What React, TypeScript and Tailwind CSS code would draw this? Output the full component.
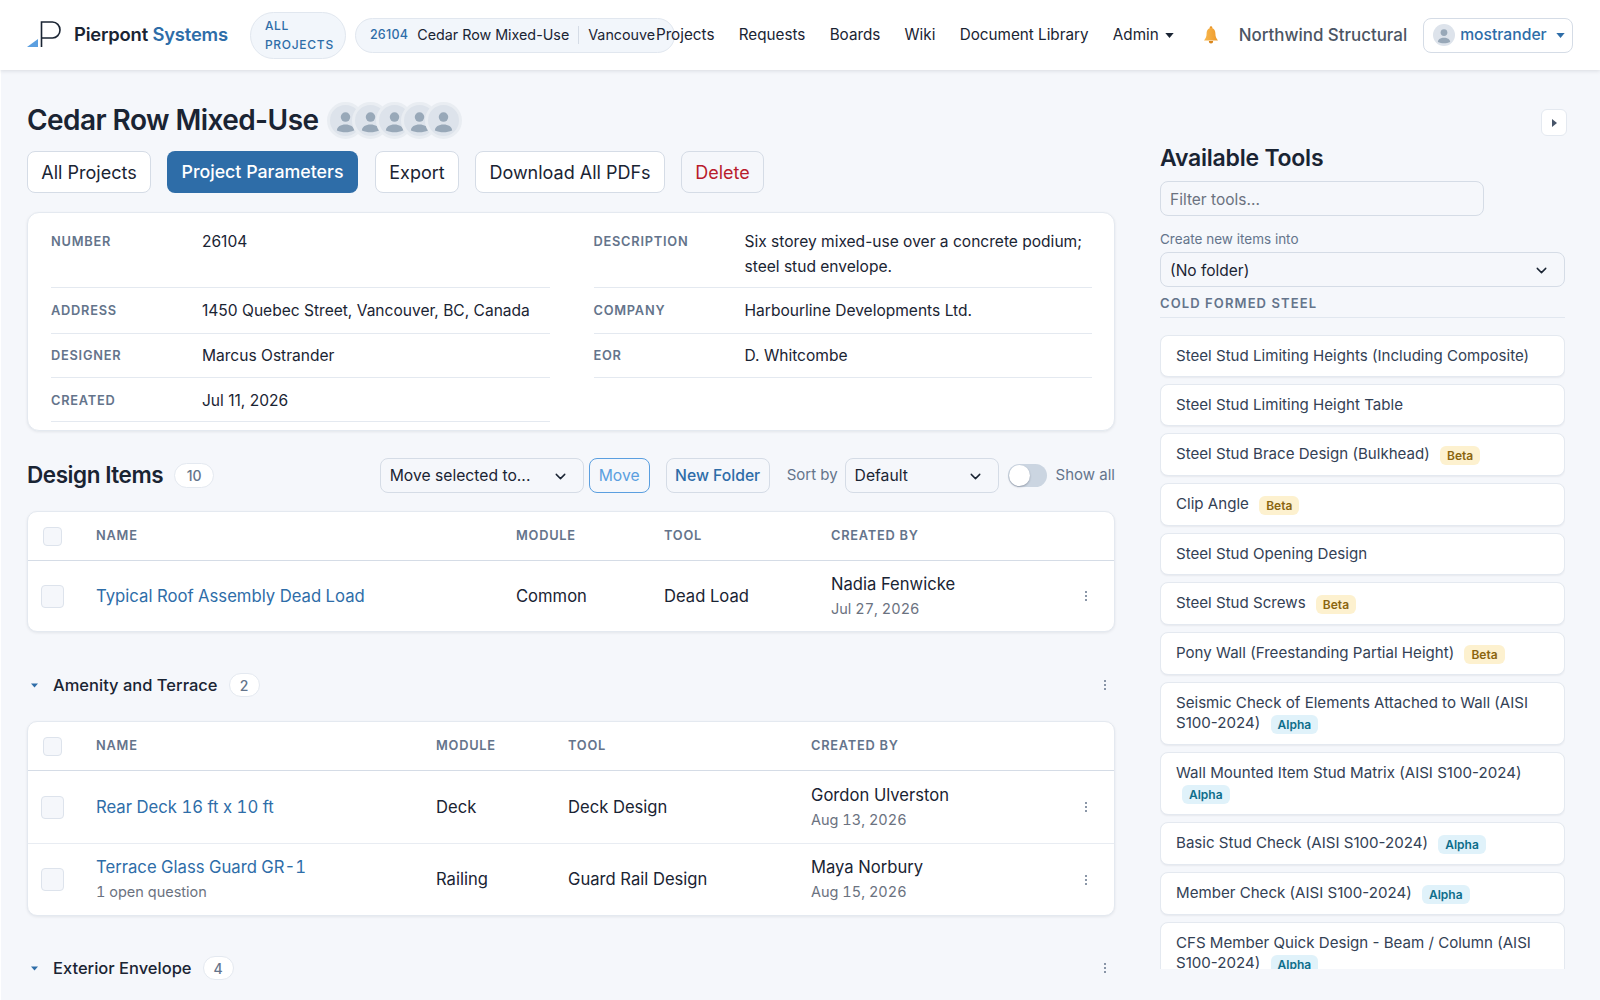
import { ChevronDown } from "lucide-react";

const navLinks = ["Projects", "Requests", "Boards", "Wiki", "Document Library"];

const params = [
  [
    ["Number", "26104"],
    ["Address", "1450 Quebec Street, Vancouver, BC, Canada"],
    ["Designer", "Marcus Ostrander"],
    ["Created", "Jul 11, 2026"],
  ],
  [
    ["Description", "Six storey mixed-use over a concrete podium; steel stud envelope."],
    ["Company", "Harbourline Developments Ltd."],
    ["EOR", "D. Whitcombe"],
  ],
];

const tools = [
  { name: "Steel Stud Limiting Heights (Including Composite)" },
  { name: "Steel Stud Limiting Height Table" },
  { name: "Steel Stud Brace Design (Bulkhead)", badge: "Beta" },
  { name: "Clip Angle", badge: "Beta" },
  { name: "Steel Stud Opening Design" },
  { name: "Steel Stud Screws", badge: "Beta" },
  { name: "Pony Wall (Freestanding Partial Height)", badge: "Beta" },
  { name: "Seismic Check of Elements Attached to Wall (AISI S100-2024)", badge: "Alpha" },
  { name: "Wall Mounted Item Stud Matrix (AISI S100-2024)", badge: "Alpha" },
  { name: "Basic Stud Check (AISI S100-2024)", badge: "Alpha" },
  { name: "Member Check (AISI S100-2024)", badge: "Alpha" },
  { name: "CFS Member Quick Design - Beam / Column (AISI S100-2024)", badge: "Alpha" },
];

function Avatar({ size = "w-[37px] h-[37px]", ring = "border-[3px] border-[#e9edf2]" }: { size?: string; ring?: string }) {
  return (
    <span className={`${size} ${ring} inline-block rounded-full bg-[#dde3eb] overflow-hidden shrink-0`}>
      <svg viewBox="0 0 36 36" className="w-full h-full">
        <circle cx="18" cy="14" r="5.500" fill="#98a8b8" />
        <path d="M8 29.500c0-4.500 4.500-7 10-7s10 2.500 10 7c-3 1.500-6.500 2-10 2s-7-.5-10-2z" fill="#98a8b8" />
      </svg>
    </span>
  );
}

function Kebab() {
  return (
    <svg width="4" height="12" viewBox="0 0 4 12" fill="#64748b">
      <circle cx="2" cy="2" r="1" />
      <circle cx="2" cy="6" r="1" />
      <circle cx="2" cy="10" r="1" />
    </svg>
  );
}

function Caret({ className }: { className: string }) {
  return (
    <svg viewBox="0 0 10 6" className={className} fill="currentColor">
      <path d="M0 0h10L5 6z" />
    </svg>
  );
}

function Check({ className }: { className: string }) {
  return <span className={`block rounded-[4px] border border-[#dde3ec] bg-[#f5f7fb] ${className}`} />;
}

type Row = { name: string; note?: string; module: string; tool: string; by: string; date: string };

function ItemsTable({ cols, rowHeight, rows }: { cols: string; rowHeight: string; rows: Row[] }) {
  return (
    <div className="bg-white rounded-[10px] border border-[#e4e9f0] shadow-[0_1px_3px_rgba(15,23,42,0.08)] overflow-hidden">
      <div className={`grid ${cols} items-center h-[49px] border-b border-[#d5dce6] text-[12.800px] font-semibold tracking-[0.06em] text-[#64748b]`}>
        <div className="pl-[15px]">
          <Check className="w-[19px] h-[19px]" />
        </div>
        <div>NAME</div>
        <div>MODULE</div>
        <div>TOOL</div>
        <div>CREATED BY</div>
      </div>
      {rows.map((r, i) => (
        <div key={r.name} className={`grid ${cols} items-center ${rowHeight} text-[16.600px] text-[#1a2433] ${i > 0 ? "border-t border-[#e8ecf2]" : ""}`}>
          <div className="pl-[13px]">
            <Check className="w-[23px] h-[23px]" />
          </div>
          <div>
            <a className="block text-[16.680px] text-[#2e6da8] leading-[24px] tabular-nums">{r.name}</a>
            {r.note && <div className="text-[14.500px] text-[#6b7280] leading-[25px] tabular-nums">{r.note}</div>}
          </div>
          <div>{r.module}</div>
          <div>{r.tool}</div>
          <div className="flex items-center justify-between pr-[26px]">
            <div>
              <div className="leading-[24px]">{r.by}</div>
              <div className="text-[14.500px] text-[#6b7280] leading-[25px] tabular-nums">{r.date}</div>
            </div>
            <Kebab />
          </div>
        </div>
      ))}
    </div>
  );
}

function Folder({ name, count }: { name: string; count: number }) {
  return (
    <div className="flex items-center h-[30px]">
      <Caret className="w-[7px] h-[5px] ml-[4px] text-[#2e6da8]" />
      <span className="ml-[15px] text-[16.500px] font-medium text-[#1a2433]">{name}</span>
      <span className="ml-[11px] w-[31px] h-[24px] rounded-full bg-white border border-[#e4e9f0] flex items-center justify-center text-[14px] font-medium text-[#64748b]">
        {count}
      </span>
      <span className="ml-auto mr-[8px]">
        <Kebab />
      </span>
    </div>
  );
}

export default function App() {
  return (
    <div className="h-[1000px] overflow-hidden bg-[#f5f7fb] font-['Inter',sans-serif] text-[#1a2433] flex flex-col">
      <header className="h-[70px] shrink-0 bg-white shadow-[0_1px_4px_rgba(15,23,42,0.12)] flex items-center pl-[27px] relative z-10">
        <svg width="36" height="28" viewBox="0 0 36 28" className="shrink-0" fill="none">
          <path d="M0 26h11V18z" fill="#5b9fe0" />
          <path d="M14.500 26V1h11a7.500 8 0 0 1 0 16h-11" stroke="#1a2433" strokeWidth="1.600" />
        </svg>
        <span className="ml-[11px] text-[18.400px] font-semibold tracking-[-0.01em] whitespace-nowrap">
          Pierpont <span className="text-[#2e6da8]">Systems</span>
        </span>
        <div className="ml-[22px] w-[96px] h-[47px] rounded-[24px] bg-[#f2f6fb] border border-[#e1e7ef] flex items-center pl-[14px] text-[12px] font-medium tracking-[0.06em] leading-[19px] text-[#2e6da8]">
          ALL
          <br />
          PROJECTS
        </div>
        <div className="ml-[9px] w-[320px] h-[35px] rounded-[18px] bg-[#f2f6fb] border border-[#e1e7ef] pl-[14px] flex items-center shrink-0">
          <div className="w-[286px] overflow-hidden flex items-center whitespace-nowrap">
            <span className="text-[12.500px] font-medium tracking-[0.02em] text-[#2e6da8]">26104</span>
            <span className="ml-[9px] text-[14.300px]">Cedar Row Mixed-Use</span>
            <span className="mx-[9px] w-px h-[18px] bg-[#d5dce6] shrink-0" />
            <span className="text-[14.300px]">Vancouver, BC</span>
          </div>
        </div>
        <nav className="-ml-[19px] flex items-center gap-[24.250px] text-[15.250px] text-[#1a2433] whitespace-nowrap relative">
          {navLinks.map((l) => (
            <a key={l}>{l}</a>
          ))}
          <a className="flex items-center gap-[6px]">
            Admin
            <Caret className="w-[9px] h-[5px]" />
          </a>
        </nav>
        <svg width="16" height="18" viewBox="0 0 16 18" className="ml-[29px] shrink-0">
          <defs>
            <linearGradient id="bell" x1="0" y1="0" x2="1" y2="0">
              <stop offset="0" stopColor="#f8b84e" />
              <stop offset="1" stopColor="#ee9a2c" />
            </linearGradient>
          </defs>
          <circle cx="8" cy="1.500" r="1.300" fill="#e9962a" />
          <path d="M8 2C5 2 3.600 4.500 3.600 7.500c0 3.500-1 5-2.600 7h14c-1.600-2-2.600-3.500-2.600-7C12.400 4.500 11 2 8 2z" fill="url(#bell)" />
          <path d="M5.800 15a2.200 2.500 0 0 0 4.400 0z" fill="#d9861c" />
        </svg>
        <span className="ml-[20px] pt-[2px] text-[16.900px] font-medium text-[#4b5563] whitespace-nowrap">Northwind Structural</span>
        <div className="ml-[16px] w-[150px] h-[35px] rounded-[8px] border border-[#d5dce6] flex items-center pl-[9px] shrink-0">
          <Avatar size="w-[22px] h-[22px]" ring="" />
          <span className="ml-[5px] text-[15.700px] font-medium text-[#2e6da8]">mostrander</span>
          <Caret className="ml-[9px] w-[9px] h-[5px] text-[#2e6da8]" />
        </div>
      </header>

      <div className="flex-1 min-h-0 flex relative border-l border-white">
        <main className="w-[1088px] ml-[26px] shrink-0 pt-[32px]">
          <div className="flex items-center h-[36px]">
            <h1 className="text-[28px] font-semibold tracking-[-0.02em] whitespace-nowrap">Cedar Row Mixed-Use</h1>
            <div className="ml-[9px] flex -space-x-[12.500px]">
              {[0, 1, 2, 3, 4].map((i) => (
                <Avatar key={i} />
              ))}
            </div>
          </div>

          <div className="mt-[13px] flex text-[18px]">
            <button className="h-[42px] w-[124px] rounded-[8px] bg-white border border-[#d5dce6]">All Projects</button>
            <button className="ml-[16px] h-[42px] w-[191px] rounded-[8px] bg-[#2e6da8] text-white text-[17.800px] font-medium">Project Parameters</button>
            <button className="ml-[17px] h-[42px] w-[84px] rounded-[8px] bg-white border border-[#d5dce6]">Export</button>
            <button className="ml-[16px] h-[42px] w-[190px] rounded-[8px] bg-white border border-[#d5dce6]">Download All PDFs</button>
            <button className="ml-[16px] h-[42px] w-[83px] rounded-[8px] bg-[#f5f7fb] border border-[#d5dce6] text-[#b91c2c]">Delete</button>
          </div>

          <section className="mt-[19px] h-[219px] bg-white rounded-[12px] border border-[#e4e9f0] shadow-[0_1px_3px_rgba(15,23,42,0.08)] pl-[23px] pr-[22px] pt-[16px] grid grid-cols-2 gap-x-[44px] content-start">
            {params.map((col, c) => (
              <div key={c}>
                {col.map(([label, value], i) => (
                  <div
                    key={label}
                    className={`flex border-b border-[#e4e9f0] text-[15.550px] ${i === 0 ? "h-[59px]" : i === 1 ? "h-[46px] pt-[10px]" : i === 2 ? "h-[44px] pt-[9px]" : "h-[44px] pt-[10px]"}`}
                  >
                    <div className="w-[151px] shrink-0 text-[12.800px] font-semibold tracking-[0.06em] text-[#64748b] uppercase leading-[25px]">{label}</div>
                    <div className="leading-[25px]">{value}</div>
                  </div>
                ))}
              </div>
            ))}
          </section>

          <div className="mt-[26px] h-[36px] flex items-center">
            <h2 className="text-[22.500px] font-semibold tracking-[-0.02em]">Design Items</h2>
            <span className="ml-[11px] w-[40px] h-[25px] rounded-full bg-white border border-[#e4e9f0] flex items-center justify-center text-[14px] font-medium text-[#64748b]">10</span>
            <div className="ml-auto flex items-center text-[15.700px]">
              <div className="w-[204px] h-[35px] rounded-[8px] bg-[#f5f7fb] border border-[#d5dce6] flex items-center justify-between pl-[9px] pr-[14px] pt-[2px]">
                Move selected to...
                <ChevronDown size={17} />
              </div>
              <button className="ml-[5px] w-[61px] h-[35px] rounded-[8px] border border-[#5b9fe0] text-[#5b9fe0] pt-[2px]">Move</button>
              <button className="ml-[16px] w-[104px] h-[35px] rounded-[8px] border border-[#d5dce6] font-medium text-[#2e6da8] pt-[2px]">New Folder</button>
              <span className="ml-[17px] text-[15px] text-[#64748b]">Sort by</span>
              <div className="ml-[7px] w-[154px] h-[35px] rounded-[8px] bg-[#f5f7fb] border border-[#d5dce6] flex items-center justify-between pl-[9px] pr-[14px] pt-[2px]">
                Default
                <ChevronDown size={17} />
              </div>
              <span className="ml-[9px] w-[39px] h-[23px] rounded-full bg-[#cbd5e1] relative">
                <span className="absolute left-[1px] top-[1px] w-[21px] h-[21px] rounded-full bg-white shadow-[0_1px_2px_rgba(15,23,42,0.3)]" />
              </span>
              <span className="ml-[9px] text-[15px] text-[#64748b]">Show all</span>
            </div>
          </div>

          <div className="mt-[18px]">
            <ItemsTable
              cols="grid-cols-[68px_420px_148px_167px_1fr]"
              rowHeight="h-[70px]"
              rows={[{ name: "Typical Roof Assembly Dead Load", module: "Common", tool: "Dead Load", by: "Nadia Fenwicke", date: "Jul 27, 2026" }]}
            />
          </div>

          <div className="mt-[38px]">
            <Folder name="Amenity and Terrace" count={2} />
          </div>
          <div className="mt-[21px]">
            <ItemsTable
              cols="grid-cols-[68px_340px_132px_243px_1fr]"
              rowHeight="h-[72px]"
              rows={[
                { name: "Rear Deck 16 ft x 10 ft", module: "Deck", tool: "Deck Design", by: "Gordon Ulverston", date: "Aug 13, 2026" },
                { name: "Terrace Glass Guard GR-1", note: "1 open question", module: "Railing", tool: "Guard Rail Design", by: "Maya Norbury", date: "Aug 15, 2026" },
              ]}
            />
          </div>
          <div className="mt-[37px]">
            <Folder name="Exterior Envelope" count={4} />
          </div>
        </main>

        <aside className="w-[405px] ml-[45px] shrink-0 flex flex-col pt-[72px] pb-[31px] min-h-0">
          <h2 className="text-[23px] font-semibold leading-[32px] tracking-[-0.01em]">Available Tools</h2>
          <input
            placeholder="Filter tools..."
            className="mt-[7px] w-[324px] h-[35px] rounded-[8px] border border-[#d5dce6] bg-[#f5f7fb] px-[9px] pt-[2px] text-[15.500px] placeholder:text-[#6b7280] outline-none"
          />
          <label className="mt-[15px] text-[13.500px] leading-[16px] text-[#64748b]">Create new items into</label>
          <div className="mt-[5px] h-[35px] rounded-[8px] border border-[#d5dce6] flex items-center justify-between pl-[9px] pr-[14px] pt-[2px] text-[15.500px]">
            (No folder)
            <ChevronDown size={17} />
          </div>
          <div className="mt-[8px] pb-[6px] border-b border-[#e1e7ef] text-[13px] font-semibold tracking-[0.085em] leading-[16px] text-[#64748b]">COLD FORMED STEEL</div>
          <div className="mt-[17px] flex-1 min-h-0 overflow-hidden flex flex-col gap-[7px]">
            {tools.map((t) => (
              <div key={t.name} className="shrink-0 rounded-[8px] bg-white border border-[#e4e9f0] shadow-[0_1px_2px_rgba(15,23,42,0.06)] px-[15px] py-[10px] text-[15.100px] leading-[20px] text-[#334155]">
                {t.name}{" "}
                {t.badge && (
                  <span className={`ml-1.5 inline-block align-[-1px] rounded-[6px] px-[7px] text-[12px] leading-[19px] font-semibold ${t.badge === "Beta" ? "bg-[#fdf1cf] text-[#8a6510]" : "bg-[#e0f2fa] text-[#0e6d8a]"}`}>
                    {t.badge}
                  </span>
                )}
              </div>
            ))}
          </div>
        </aside>

        <button className="absolute left-[1540px] top-[39px] w-[26px] h-[27px] rounded-[6px] bg-white border border-[#e4e9f0] flex items-center justify-center text-[#475569]">
          <svg width="5" height="8" viewBox="0 0 5 8" fill="currentColor">
            <path d="M0 0l5 4-5 4z" />
          </svg>
        </button>
      </div>
    </div>
  );
}
